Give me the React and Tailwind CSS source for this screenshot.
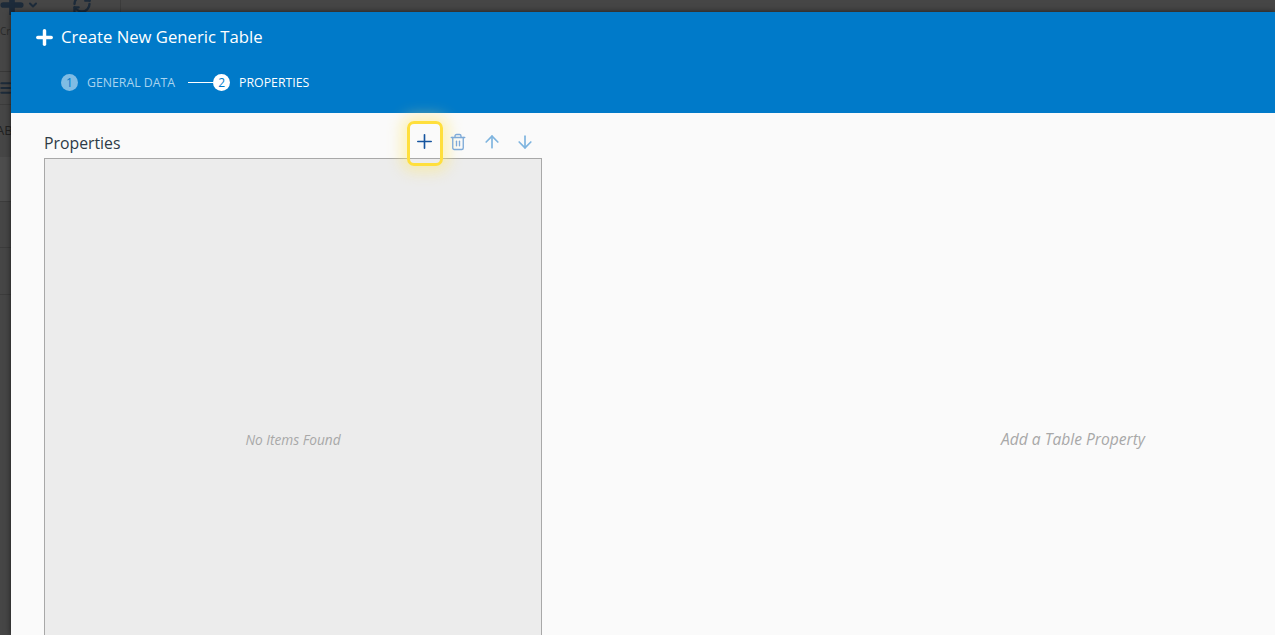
import { ArrowDown, ArrowUp, ChevronDown, List, Plus, RefreshCw, Trash2 } from "lucide-react";

const font = { fontFamily: '"Open Sans", sans-serif' };

// dimmed page sitting behind the dialog, only slivers of it are visible
function BackgroundPage() {
  return (
    <div className="flex h-[635px] flex-col overflow-hidden bg-[#464646] text-[#1d2b3a]">
      <div className="flex h-[72px] shrink-0 border-b border-[#383838]">
        <div className="flex h-full w-[121px] shrink-0 border-r border-[#3c3c3c]">
          <div className="w-[72px] shrink-0">
            <div className="-mt-[10px] flex h-[25px] items-start overflow-hidden">
              <Plus size={30} strokeWidth={4.5} className="-ml-[3px] shrink-0" />
              <ChevronDown size={12} strokeWidth={4} className="mt-[9px] shrink-0" />
            </div>
            <div className="mt-[10px] text-[10px] leading-[12px] text-[#2a2a2a]">Cr</div>
          </div>
          <RefreshCw className="-mt-[6px] shrink-0" size={20} strokeWidth={2.8} />
        </div>
      </div>
      <div className="flex h-[33px] shrink-0 items-center border-b border-[#3c3c3c]">
        <List size={16} strokeWidth={3} className="-ml-[4px]" />
      </div>
      <div className="flex h-[52px] shrink-0 items-center text-[13px] text-[#222]">
        <span className="-ml-[4px]">AB</span>
      </div>
      <div className="flex h-[45px] shrink-0 items-center justify-end border-b border-[#3c3c3c] bg-[#4d4d4d]">
        <span className="h-[5px] w-[2px] bg-[#1d2b3a]" />
      </div>
      <div className="flex h-[46px] shrink-0 items-center justify-end border-b border-[#3c3c3c]">
        <span className="h-[8px] w-[2px] bg-[#1d2b3a]" />
      </div>
      <div className="flex h-[47px] shrink-0 items-center justify-end border-b border-[#3c3c3c]">
        <span className="h-[5px] w-[2px] bg-[#1d2b3a]" />
      </div>
    </div>
  );
}

function ToolButton({ children, highlighted }) {
  return (
    <button className="relative flex h-[33px] w-[33.5px] items-center justify-center">
      {highlighted ? (
        <span className="absolute -top-[4px] left-[-1.5px] h-[45px] w-[36px] rounded-[7px] border-[3px] border-[#ffdf3c] shadow-[0_0_14px_6px_rgba(255,232,110,0.45)]" />
      ) : null}
      {children}
    </button>
  );
}

export default function App() {
  return (
    <div className="relative h-[635px] overflow-hidden" style={font}>
      <BackgroundPage />
      <div className="absolute bottom-0 left-[11px] right-0 top-[12px] overflow-hidden bg-[#fafafa] shadow-[0_0_6px_rgba(0,0,0,0.6)]">
        <header className="h-[101px] bg-[#007ac9] text-white">
          <div className="flex items-center pl-[22px] pt-[13px]">
            <Plus size={23} strokeWidth={3.6} className="shrink-0" />
            <h1 className="ml-[5px] text-[16.7px] font-normal leading-[24px]">Create New Generic Table</h1>
          </div>
          <div className="mt-[25px] flex items-center pl-[50px] text-[12.3px] leading-[16px]">
            <span className="flex h-[17px] w-[17px] items-center justify-center rounded-full bg-[#7fbce4] text-[12px] text-[#007ac9]">1</span>
            <span className="ml-[9px] text-[#a9d4ef]">GENERAL DATA</span>
            <span className="ml-[13px] h-px w-[25px] bg-white" />
            <span className="flex h-[17px] w-[17px] items-center justify-center rounded-full bg-white text-[12px] text-[#007ac9]">2</span>
            <span className="ml-[9px]">PROPERTIES</span>
          </div>
        </header>
        <div className="flex pl-[33px] pt-[12px]">
          <section className="w-[498px] shrink-0">
            <div className="flex h-[33px] items-center justify-between">
              <h2 className="pt-[5px] text-[15.8px] font-normal text-[#2e3a46]">Properties</h2>
              <div className="flex">
                <ToolButton highlighted>
                  <Plus size={23} strokeWidth={1.7} className="text-[#15549f]" />
                </ToolButton>
                <ToolButton>
                  <Trash2 size={18} strokeWidth={1.8} className="text-[#7eaad8]" />
                </ToolButton>
                <ToolButton>
                  <ArrowUp size={20} strokeWidth={2} className="text-[#7eb4df]" />
                </ToolButton>
                <ToolButton>
                  <ArrowDown size={20} strokeWidth={2} className="text-[#7eb4df]" />
                </ToolButton>
              </div>
            </div>
            <div className="flex h-[562px] items-center justify-center border border-[#a8a8a8] bg-[#ececec] pt-[2px]">
              <p className="text-[13.7px] italic text-[#a8a8a8]">No Items Found</p>
            </div>
          </section>
          <div className="mt-[33px] flex h-[562px] flex-1 items-center justify-center pl-[329px] pt-[2px]">
            <p className="text-[15.6px] italic text-[#a8a8a8]">Add a Table Property</p>
          </div>
        </div>
      </div>
    </div>
  );
}
